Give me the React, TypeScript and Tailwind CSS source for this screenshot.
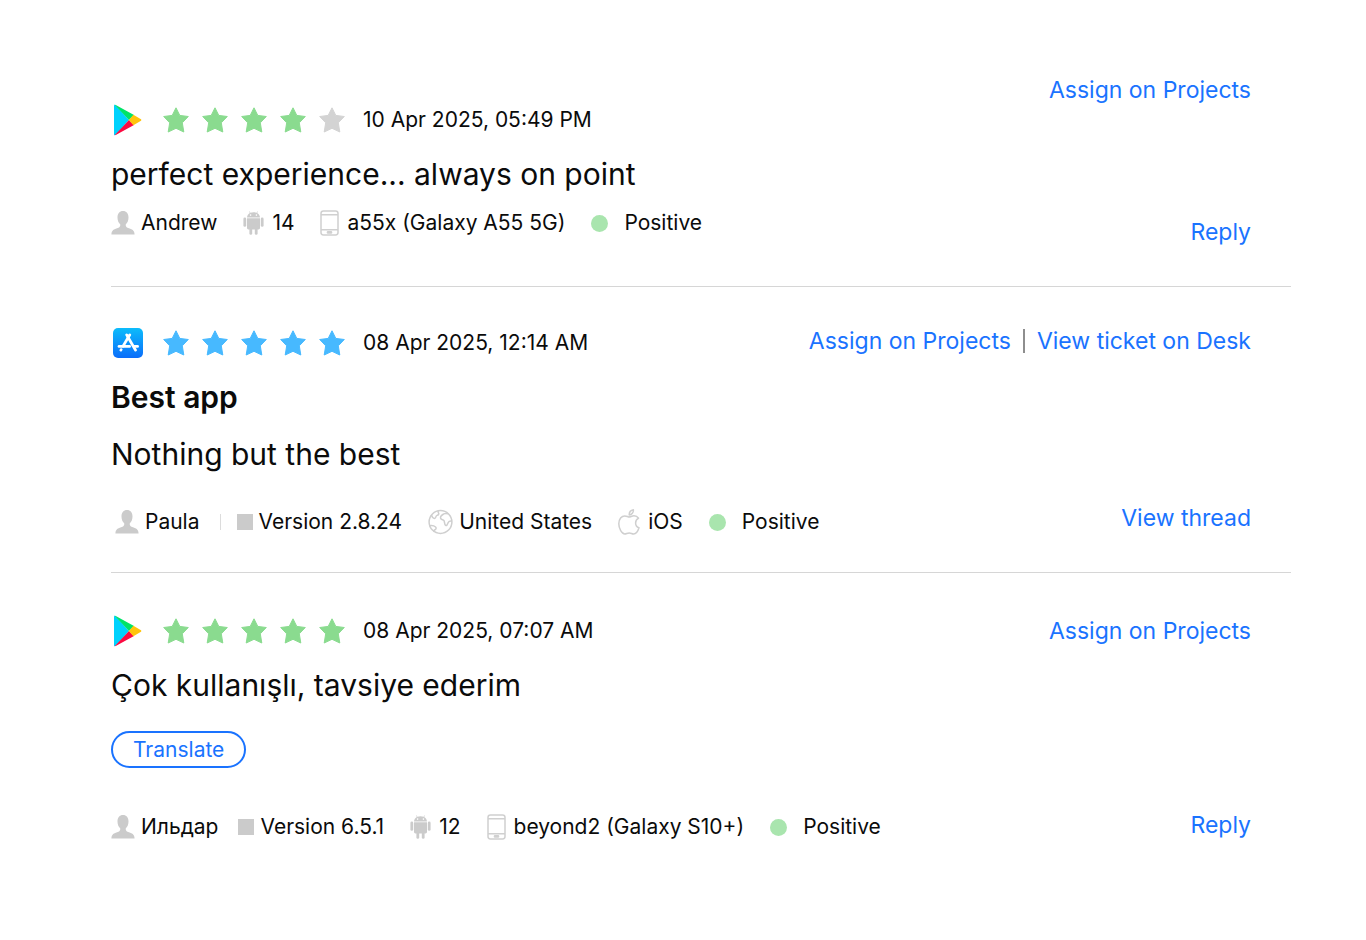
import type { ReactNode } from "react";

type Store = "play" | "apple";

const starPath =
  "M13 0.8 L16.8 8.4 L25.3 9.5 L19.3 15.8 L20.8 25 L13 21.3 L5.2 25 L6.7 15.8 L0.7 9.5 L9.2 8.4 Z";

const PlayIcon = () => (
  <svg width="30" height="32" viewBox="0 0 30 32" aria-hidden="true">
    <path d="M1 1.6 C1 0.6 1.8 0.6 2.6 1.2 L16 16 L2.6 30.8 C1.8 31.4 1 31.4 1 30.4 Z" fill="#00d2fd" />
    <path d="M1.6 0.8 C2 0.6 2.6 0.8 3.2 1.2 L21 11 L16 16 Z" fill="#00e368" />
    <path d="M1.6 31.2 C2 31.4 2.6 31.2 3.2 30.8 L21 21 L16 16 Z" fill="#fc0a41" />
    <path d="M20.4 10.8 L28 15.2 Q28.8 16 28 16.8 L20.4 21.2 L15.8 16 Z" fill="#ffc40c" />
  </svg>
);

const AppStoreIcon = () => (
  <svg width="30" height="30" viewBox="0 0 30 30" aria-hidden="true">
    <defs>
      <linearGradient id="appstore" x1="0" y1="0" x2="0" y2="1">
        <stop offset="0" stopColor="#0cbcfb" />
        <stop offset="1" stopColor="#0b6dfa" />
      </linearGradient>
    </defs>
    <rect width="30" height="30" rx="5" fill="url(#appstore)" />
    <g stroke="#fff" strokeWidth="2.7" strokeLinecap="round" fill="none">
      <path d="M16.8 6.8 L10 18.2" />
      <path d="M13.6 6.8 L22.6 22.2" />
      <path d="M6 18.4 H16.6" />
      <path d="M21 18.4 H24.6" />
      <path d="M8.2 21.6 L7.8 22.2" />
    </g>
  </svg>
);

const UserIcon = () => (
  <svg width="24" height="24" viewBox="0 0 24 24" fill="#cbcbcb" aria-hidden="true">
    <path d="M12 0 C15.4 0 17.5 2.5 17.5 6.4 C17.5 9.3 16.5 11.9 14.8 13.2 C14.4 15.2 15.2 16.3 17.2 16.9 C21.2 18 23.4 19.2 23.6 23.4 H0.4 C0.6 19.2 2.8 18 6.8 16.9 C8.8 16.3 9.6 15.2 9.2 13.2 C7.5 11.9 6.5 9.3 6.5 6.4 C6.5 2.5 8.6 0 12 0 Z" />
  </svg>
);

const AndroidIcon = () => (
  <svg width="21" height="24" viewBox="0 0 21 24" fill="#cbcbcb" aria-hidden="true">
    <path d="M4 6.5 C4.2 4.3 5.3 2.8 6.9 2 L6 0.6 L6.4 0.3 L7.4 1.7 C9.3 1 11.7 1 13.6 1.7 L14.6 0.3 L15 0.6 L14.1 2 C15.7 2.8 16.8 4.3 17 6.5 Z" />
    <circle cx="7.6" cy="4.1" r="0.8" fill="#fff" />
    <circle cx="13.4" cy="4.1" r="0.8" fill="#fff" />
    <path d="M4 7.3 H17 V17 Q17 18.4 15.6 18.4 H5.4 Q4 18.4 4 17 Z" />
    <rect x="0.4" y="6.6" width="2.8" height="9.2" rx="1.4" />
    <rect x="17.8" y="6.6" width="2.8" height="9.2" rx="1.4" />
    <rect x="6.4" y="16" width="2.8" height="7.8" rx="1.4" />
    <rect x="11.8" y="16" width="2.8" height="7.8" rx="1.4" />
  </svg>
);

const PhoneIcon = () => (
  <svg width="19" height="26" viewBox="0 0 19 26" fill="none" stroke="#d0d0d0" strokeWidth="1.5" aria-hidden="true">
    <rect x="1" y="1" width="17" height="24" rx="2.4" />
    <path d="M1 4.8 H18 M1 19.8 H18" />
    <rect x="7.4" y="21.8" width="4.2" height="1.2" rx="0.6" />
  </svg>
);

const GlobeIcon = () => (
  <svg width="25" height="26" viewBox="0 0 25 26" fill="none" stroke="#cfcfcf" strokeWidth="1.5" strokeLinejoin="round" aria-hidden="true">
    <circle cx="12.5" cy="13" r="11.4" />
    <path d="M3.4 6 C4.2 8 4.6 9.6 6.4 9.4 C8.4 9.2 7.4 7 9 6.4 C10.4 6 11.4 5.2 10.4 3.8 C10 3 10 2.4 10.2 1.8" />
    <path d="M20.6 4.8 C18.8 4.4 17 4 15.6 5 C13.6 6.2 12 7.4 12.6 9.2 C13.2 11 15.2 10.4 16 11.6 C16.8 13 16.2 15.4 17.6 16.4 C19.2 17.2 19.4 14.6 20.4 13.2 C21.2 12 22.4 12.2 23.8 12" />
    <path d="M1.4 16.8 C3.6 16.4 6 16.6 7.6 18 C8.8 19.2 7.8 20.4 6.6 21 C5.6 21.6 5.8 22.4 6 22.8" />
  </svg>
);

const AppleIcon = () => (
  <svg width="22" height="26" viewBox="0 0 22 26" fill="none" stroke="#cfcfcf" strokeWidth="1.5" strokeLinejoin="round" aria-hidden="true">
    <path d="M11 8 C12.6 8 13.8 6.8 16 6.8 C18 6.8 19.6 7.8 20.6 9.2 C18.6 10.4 17.6 12 17.6 13.9 C17.6 16.2 19 18 21 18.8 C20.2 21.4 18 25 15.6 25 C13.8 25 13.2 24 11.2 24 C9.2 24 8.4 25 6.8 25 C3.8 25 0.8 19.6 0.8 14.8 C0.8 10 3.6 6.9 6.8 6.9 C8.8 6.9 9.8 8 11 8 Z" />
    <path d="M11.2 6 C11.2 3.4 12.8 1.2 15.4 0.8 C15.6 3.4 13.8 5.8 11.2 6 Z" />
  </svg>
);

const SquareIcon = () => <span className="-ml-1.5 size-4 bg-[#cbcbcb]" />;

const Dot = () => <span className="size-[17px] rounded-full bg-[#a9e5ae]" />;

const Rating = ({ store, value, date }: { store: Store; value: number; date: string }) => (
  <div className="flex h-8 items-center">
    <div className="flex w-[52px] items-center pl-0.5">
      {store === "play" ? <PlayIcon /> : <AppStoreIcon />}
    </div>
    <div className="flex gap-[13px]" role="img" aria-label={`${value} out of 5 stars`}>
      {[1, 2, 3, 4, 5].map((n) => {
        const color = n > value ? "#d3d3d3" : store === "play" ? "#8adb8f" : "#47b9ff";
        return (
          <svg key={n} width="26" height="26" viewBox="0 0 26 26">
            <path d={starPath} fill={color} stroke={color} strokeWidth="1" strokeLinejoin="round" />
          </svg>
        );
      })}
    </div>
    <time className="ml-[18px] text-[21px]">{date}</time>
  </div>
);

const Meta = ({ icon, gap, children }: { icon: ReactNode; gap: string; children: ReactNode }) => (
  <li className={`flex items-center whitespace-nowrap ${gap}`}>
    {icon}
    <span>{children}</span>
  </li>
);

const ActionLink = ({ children }: { children: ReactNode }) => (
  <a href="#" className="text-[23px] leading-8 whitespace-nowrap text-[#1a73ff] hover:underline">
    {children}
  </a>
);

const App = () => {
  return (
    <main className="bg-white pt-[74px] pr-[75px] pl-[111px] font-['Inter','Liberation_Sans',sans-serif] text-[#0b0b0b]">
      <article className="flex justify-between border-b border-[#d6d6d6] pr-10 pb-[38px]">
        <div className="min-w-0 pt-[30px] pb-[9px]">
          <Rating store="play" value={4} date="10 Apr 2025, 05:49 PM" />
          <p className="mt-[18px] text-[30px] leading-10">perfect experience... always on point</p>
          <ul className="mt-[13px] flex h-8 items-center gap-[26px] text-[21px]">
            <Meta icon={<UserIcon />} gap="gap-1.5">Andrew</Meta>
            <Meta icon={<AndroidIcon />} gap="gap-2">14</Meta>
            <Meta icon={<PhoneIcon />} gap="gap-2">a55x (Galaxy A55 5G)</Meta>
            <Meta icon={<Dot />} gap="gap-4">Positive</Meta>
          </ul>
        </div>
        <div className="flex shrink-0 flex-col items-end justify-between">
          <ActionLink>Assign on Projects</ActionLink>
          <ActionLink>Reply</ActionLink>
        </div>
      </article>

      <article className="flex justify-between border-b border-[#d6d6d6] pt-[38px] pr-10 pb-[34px]">
        <div className="min-w-0 pt-0.5">
          <Rating store="apple" value={5} date="08 Apr 2025, 12:14 AM" />
          <h2 className="mt-[18px] text-[30px] leading-10 font-semibold">Best app</h2>
          <p className="mt-[17px] text-[30px] leading-10">Nothing but the best</p>
          <ul className="mt-8 flex h-8 items-center gap-[26px] pl-1 text-[21px]">
            <Meta icon={<UserIcon />} gap="gap-1.5">Paula</Meta>
            <Meta
              icon={
                <>
                  <span className="-ml-1.5 mr-4 h-4 w-px bg-[#dcdcdc]" />
                  <SquareIcon />
                </>
              }
              gap="gap-1.5"
            >
              Version 2.8.24
            </Meta>
            <Meta icon={<GlobeIcon />} gap="gap-1.5">United States</Meta>
            <Meta icon={<AppleIcon />} gap="gap-2">iOS</Meta>
            <Meta icon={<Dot />} gap="gap-4">Positive</Meta>
          </ul>
        </div>
        <div className="flex shrink-0 flex-col items-end justify-between pb-1">
          <div className="flex items-center gap-3">
            <ActionLink>Assign on Projects</ActionLink>
            <span className="h-6 w-0.5 bg-[#8e8e8e]" />
            <ActionLink>View ticket on Desk</ActionLink>
          </div>
          <ActionLink>View thread</ActionLink>
        </div>
      </article>

      <article className="flex justify-between pt-[42px] pr-10">
        <div className="min-w-0">
          <Rating store="play" value={5} date="08 Apr 2025, 07:07 AM" />
          <p className="mt-[18px] text-[30px] leading-10">Çok kullanışlı, tavsiye ederim</p>
          <button
            type="button"
            className="mt-[26px] block h-[37px] rounded-full border-2 border-[#1a73ff] px-5 text-[21px] leading-8 text-[#1a73ff]"
          >
            Translate
          </button>
          <ul className="mt-[43px] flex h-8 items-center gap-[26px] text-[21px]">
            <Meta icon={<UserIcon />} gap="gap-1.5">Ильдар</Meta>
            <Meta icon={<SquareIcon />} gap="gap-1.5">Version 6.5.1</Meta>
            <Meta icon={<AndroidIcon />} gap="gap-2">12</Meta>
            <Meta icon={<PhoneIcon />} gap="gap-2">beyond2 (Galaxy S10+)</Meta>
            <Meta icon={<Dot />} gap="gap-4">Positive</Meta>
          </ul>
        </div>
        <div className="flex shrink-0 flex-col items-end justify-between pb-0.5">
          <ActionLink>Assign on Projects</ActionLink>
          <ActionLink>Reply</ActionLink>
        </div>
      </article>
    </main>
  );
};

export default App;
